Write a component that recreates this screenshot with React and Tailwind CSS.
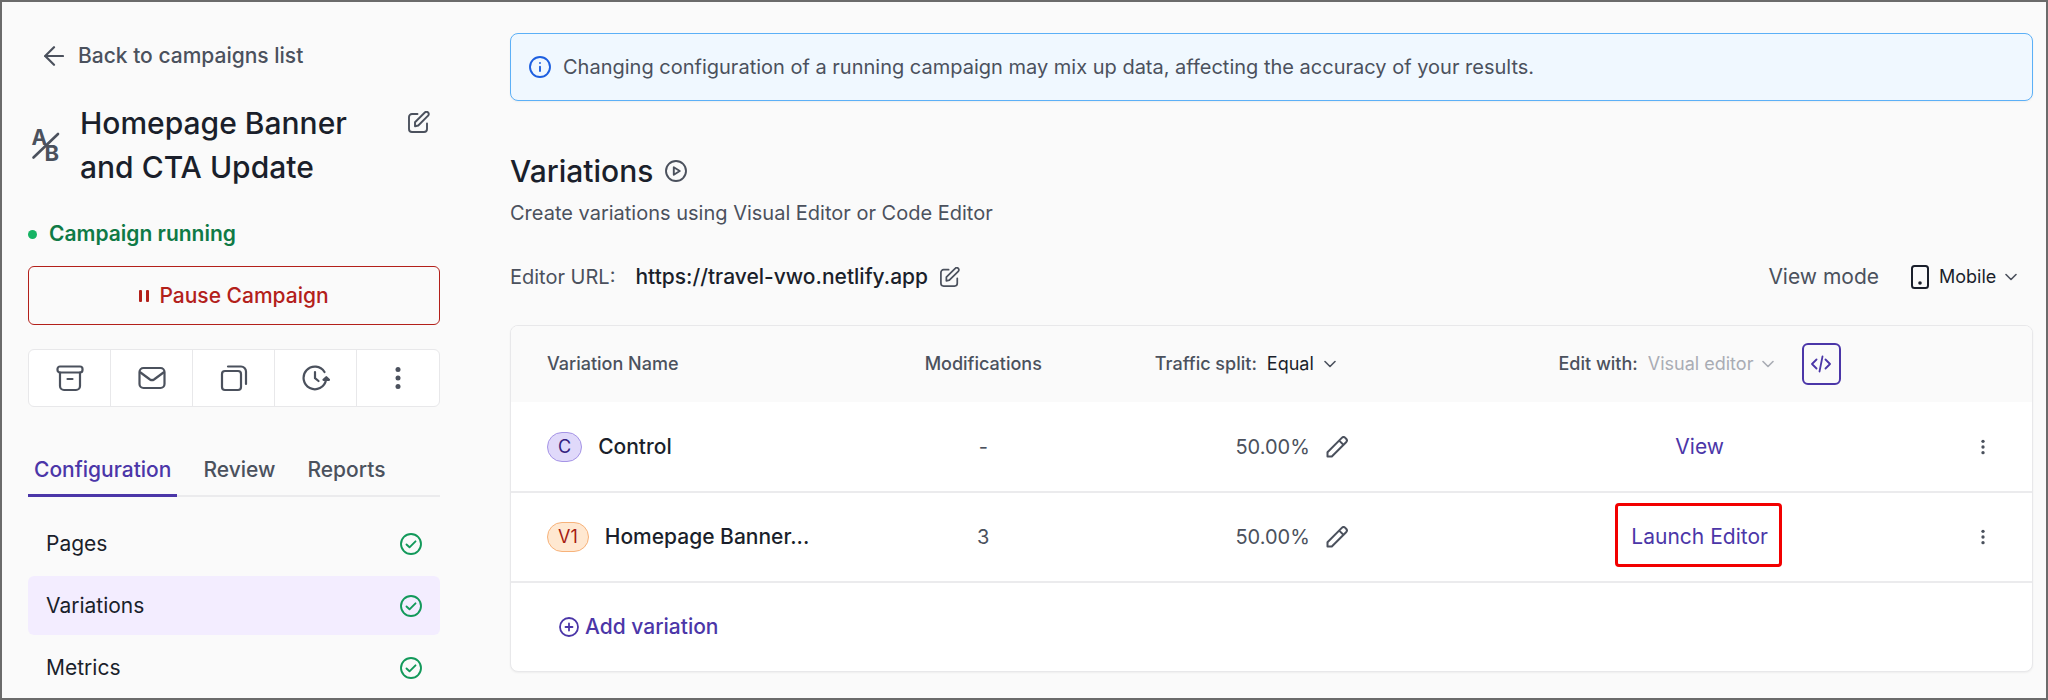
import React from "react";

const ink = "text-[#1a1f2b]";

function Svg({ className, viewBox = "0 0 24 24", width = 2, children }) {
  return (
    <svg
      className={`shrink-0 ${className}`}
      viewBox={viewBox}
      fill="none"
      stroke="currentColor"
      strokeWidth={width}
      strokeLinecap="round"
      strokeLinejoin="round"
      aria-hidden="true"
    >
      {children}
    </svg>
  );
}

const BackArrow = () => (
  <Svg className="h-5 w-5" viewBox="0 0 20 20" width={2.2}>
    <path d="M19 10H1M10 1.200 1.200 10l8.800 8.800" />
  </Svg>
);

const EditSquare = ({ className }) => (
  <Svg className={className} viewBox="0 0 22 22" width={1.9}>
    <path d="M9.500 3H4a3 3 0 0 0-3 3v12a3 3 0 0 0 3 3h12a3 3 0 0 0 3-3v-5.500" />
    <path d="M7 11.200 16.800 1.500a2.200 2.200 0 0 1 3.300 0 2.200 2.200 0 0 1 0 3.200L10.300 14.500 7 15.200z" />
  </Svg>
);

const AbIcon = () => (
  <svg className="h-8 w-7 shrink-0 overflow-visible" viewBox="0 0 28 32" aria-hidden="true">
    <path d="M26 5 1.500 28.500" stroke="currentColor" strokeWidth="2.600" strokeLinecap="round" />
    <g fill="currentColor" fontFamily="Inter, sans-serif" fontWeight="700">
      <text x="-0.500" y="15.500" fontSize="21">A</text>
      <text x="12.500" y="32" fontSize="22">B</text>
    </g>
  </svg>
);

const ArchiveIcon = () => (
  <Svg className="h-7 w-7" viewBox="0 0 28 28" width={2.2}>
    <rect x="1.500" y="2.500" width="25" height="6" rx="2.500" />
    <path d="M4 8.500V22a4 4 0 0 0 4 4h12a4 4 0 0 0 4-4V8.500M11.500 15h5" />
  </Svg>
);

const MailIcon = () => (
  <Svg className="h-7 w-7" viewBox="0 0 28 28" width={2.2}>
    <rect x="1.500" y="4" width="25" height="20" rx="4" />
    <path d="m2.500 8.500 9.500 7a3.500 3.500 0 0 0 4 0l9.500-7" />
  </Svg>
);

const CopyIcon = () => (
  <Svg className="h-7 w-7" viewBox="0 0 28 28" width={2.2}>
    <rect x="2" y="7" width="19" height="19" rx="3" />
    <path d="M8 2.500h13a5 5 0 0 1 5 5V20" />
  </Svg>
);

const HistoryIcon = () => (
  <Svg className="h-7 w-7" viewBox="0 0 28 28" width={2.2}>
    <path d="M22.500 8A11.300 11.300 0 1 0 24 16M13 8v6.200l3.500 2.800" />
    <path d="M21.500 15.800 24.300 13.200l2.700 2.600z" fill="currentColor" />
  </Svg>
);

const DotsIcon = ({ className }) => (
  <svg className={`shrink-0 ${className}`} viewBox="0 0 24 24" fill="currentColor" aria-hidden="true">
    <circle cx="12" cy="3.500" r="2.500" />
    <circle cx="12" cy="12" r="2.500" />
    <circle cx="12" cy="20.500" r="2.500" />
  </svg>
);

const CheckIcon = () => (
  <Svg className="h-[22px] w-[22px] text-[#12995a]" viewBox="0 0 22 22" width={1.9}>
    <circle cx="11" cy="11" r="10" />
    <path d="m6.500 11.500 3 2.800 6-6" />
  </Svg>
);

const InfoIcon = () => (
  <Svg className="h-[22px] w-[22px] text-[#1d5fe0]" viewBox="0 0 22 22" width={1.9}>
    <circle cx="11" cy="11" r="10" />
    <path d="M11 10.800V15M11 7v.1" />
  </Svg>
);

const PlayIcon = () => (
  <Svg className="h-[22px] w-[22px]" viewBox="0 0 22 22" width={1.9}>
    <circle cx="11" cy="11" r="10" />
    <path d="M8.800 7.300v7.400l6-3.700z" />
  </Svg>
);

const PlusIcon = () => (
  <Svg className="h-5 w-5" viewBox="0 0 20 20" width={1.8}>
    <circle cx="10" cy="10" r="9" />
    <path d="M10 6.500v7M6.500 10h7" />
  </Svg>
);

const PencilIcon = () => (
  <Svg className="h-[22px] w-[22px]" viewBox="0 0 22 22">
    <path d="M1.500 20.500v-4.300L15.800 1.900a2.500 2.500 0 0 1 3.500 0l.8.8a2.500 2.500 0 0 1 0 3.500L5.800 20.500zM13.200 4.600l4.200 4.200" />
  </Svg>
);

const PhoneIcon = () => (
  <svg className="h-6 w-[18px] shrink-0" viewBox="0 0 18 24" fill="none" aria-hidden="true">
    <rect x="1" y="1" width="16" height="22" rx="2.500" stroke="currentColor" strokeWidth="2" />
    <circle cx="9" cy="18" r="1.800" fill="currentColor" />
  </svg>
);

const CodeIcon = () => (
  <Svg className="h-5 w-5" viewBox="0 0 20 20" width={1.8}>
    <path d="M5.500 5.500 1 10l4.500 4.500M14.500 5.500 19 10l-4.500 4.500M11.500 2.500l-3 15" />
  </Svg>
);

const Chevron = () => (
  <Svg className="pointer-events-none h-3 w-3" viewBox="0 0 12 12" width={1.6}>
    <path d="m1 3.500 5 5 5-5" />
  </Svg>
);

function Picker({ id, label, value, width, tone, chevronTone }) {
  return (
    <span className={`inline-grid items-center ${width}`}>
      <select
        id={id}
        aria-label={label}
        className={`col-start-1 row-start-1 w-full appearance-none bg-transparent ${tone}`}
      >
        <option>{value}</option>
      </select>
      <span className={`pointer-events-none col-start-1 row-start-1 justify-self-end ${chevronTone}`}>
        <Chevron />
      </span>
    </span>
  );
}

const actions = [
  ["Archive", <ArchiveIcon />],
  ["Send by mail", <MailIcon />],
  ["Duplicate", <CopyIcon />],
  ["History", <HistoryIcon />],
  ["More", <DotsIcon className="h-6 w-6" />],
];

const steps = ["Pages", "Variations", "Metrics"];

function Sidebar() {
  return (
    <aside className="flex w-[412px] shrink-0 flex-col text-[#4b515d]">
      <a href="#campaigns" className="flex items-center gap-3.5 pt-3 pl-4 text-[21px] leading-8 font-medium">
        <BackArrow />
        Back to campaigns list
      </a>

      <div className="mt-[29px] flex items-center gap-5 pr-2.5 pl-1">
        <AbIcon />
        <h1 className={`min-w-0 flex-1 pr-8 text-[30px] leading-11 font-medium ${ink}`}>
          Homepage Banner and CTA Update
        </h1>
        <button aria-label="Rename campaign" className="self-start pt-2.5">
          <EditSquare className="h-[22px] w-[22px]" />
        </button>
      </div>

      <p className="mt-[29px] flex items-center gap-3 text-[21px] leading-8 font-semibold text-[#0f7a46]">
        <span className="h-[9px] w-[9px] rounded-full bg-[#16b364]" />
        Campaign running
      </p>

      <button className="mt-4 flex h-[59px] items-center justify-center gap-2.5 rounded-md border border-[#b3201a] text-[21px] font-medium text-[#b3201a]">
        <svg className="h-3 w-2.5" viewBox="0 0 10 12" fill="currentColor" aria-hidden="true">
          <rect x="0" width="3" height="12" rx="1" />
          <rect x="7" width="3" height="12" rx="1" />
        </svg>
        Pause Campaign
      </button>

      <div className="mt-6 grid h-[58px] grid-cols-5 divide-x divide-[#e8e8ea] rounded-md border border-[#e8e8ea] bg-white">
        {actions.map(([name, icon]) => (
          <button key={name} aria-label={name} className="flex items-center justify-center">
            {icon}
          </button>
        ))}
      </div>

      <nav className="mt-[41px] flex border-b-2 border-[#ebebed] text-[21px] leading-8 font-medium">
        <a href="#configuration" className="-mb-0.5 border-b-[3px] border-[#4b36a8] px-1.5 pt-1.5 pb-2 text-[#4b36a8]">
          Configuration
        </a>
        <a href="#review" className="ml-5 px-1.5 pt-1.5 pb-2">Review</a>
        <a href="#reports" className="ml-5 px-1.5 pt-1.5 pb-2">Reports</a>
      </nav>

      <ul className={`mt-[17px] flex flex-col gap-[3px] text-[21px] ${ink}`}>
        {steps.map((step) => (
          <li key={step}>
            <a
              href={`#${step.toLowerCase()}`}
              className={`flex h-[59px] items-center justify-between rounded-md px-[18px] ${
                step === "Variations" ? "bg-[#f3edff]" : ""
              }`}
            >
              {step}
              <CheckIcon />
            </a>
          </li>
        ))}
      </ul>
    </aside>
  );
}

const rows = [
  {
    tag: "C",
    name: "Control",
    changes: "-",
    split: "50.00%",
    action: "View",
    badge: "border-[#a594e6] bg-[#e0d9fa] text-[#33207f]",
  },
  {
    tag: "V1",
    name: "Homepage Banner...",
    changes: "3",
    split: "50.00%",
    action: "Launch Editor",
    badge: "border-[#f7b27a] bg-[#ffe8d1] text-[#a61b12]",
    marked: true,
  },
];

function VariationsTable() {
  return (
    <div className="mt-8 overflow-hidden rounded-lg border border-[#e8e8ea] bg-white shadow-xs">
      <table className="w-full table-fixed text-[20px] text-[#4b515d]">
        <colgroup>
          <col className="w-[21.2%]" />
          <col className="w-[19.7%]" />
          <col className="w-[22.8%]" />
          <col className="w-[28.9%]" />
          <col className="w-[7.4%]" />
        </colgroup>
        <thead className="bg-[#fafafa] text-[18px]">
          <tr className="h-[76px]">
            <th className="pl-9 text-left font-medium">Variation Name</th>
            <th className="font-medium">Modifications</th>
            <th className="pr-[132px] font-medium">
              <div className="flex items-center justify-end gap-2.5 pr-3 whitespace-nowrap">
                <label htmlFor="split">Traffic split:</label>
                <span className="font-normal">
                  <Picker id="split" label="Traffic split" value="Equal" width="w-[69px]" tone={ink} chevronTone="text-[#4b515d]" />
                </span>
              </div>
            </th>
            <th className="font-medium">
              <div className="flex items-center justify-center whitespace-nowrap">
                <label htmlFor="editor">Edit with:</label>
                <span className="pl-2.5 font-normal">
                  <Picker id="editor" label="Edit with" value="Visual editor" width="w-[126px]" tone="text-[#a9acb4]" chevronTone="text-[#a9acb4]" />
                </span>
                <button
                  aria-label="Open code editor"
                  className="ml-7 flex h-[42px] w-[39px] items-center justify-center rounded-md border-2 border-[#4b36a8] text-[#4b36a8]"
                >
                  <CodeIcon />
                </button>
              </div>
            </th>
            <th aria-label="Options" />
          </tr>
        </thead>
        <tbody>
          {rows.map((row) => (
            <tr key={row.tag} className="h-[90px] border-b-2 border-[#ebebed]">
              <td className="pl-9">
                <div className="flex items-center gap-4 whitespace-nowrap">
                  <span className={`flex h-[30px] items-center rounded-full border px-2.5 text-[18px] ${row.badge}`}>
                    {row.tag}
                  </span>
                  <span className={`text-[21px] font-medium ${ink}`}>{row.name}</span>
                </div>
              </td>
              <td className="text-center">{row.changes}</td>
              <td className="pr-[132px]">
                <div className="flex items-center justify-end gap-4">
                  {row.split}
                  <button aria-label={`Edit traffic of ${row.name}`}>
                    <PencilIcon />
                  </button>
                </div>
              </td>
              <td className="text-center">
                <span className="relative inline-block text-[21px]">
                  <a href="#editor" className="text-[#4b36a8]">{row.action}</a>
                  {row.marked && (
                    <span className="pointer-events-none absolute -top-[18px] -right-3.5 -bottom-3.5 -left-4 rounded-sm border-[3px] border-[#f20000]" />
                  )}
                </span>
              </td>
              <td className="pr-10">
                <button aria-label={`Options of ${row.name}`} className="ml-auto block">
                  <DotsIcon className="h-4 w-[18px]" />
                </button>
              </td>
            </tr>
          ))}
        </tbody>
      </table>
      <div className="flex h-[88px] items-center pl-12">
        <button className="flex items-center gap-1.5 text-[21px] font-medium text-[#4b36a8]">
          <PlusIcon />
          Add variation
        </button>
      </div>
    </div>
  );
}

export default function App() {
  return (
    <div className="flex min-h-screen gap-[70px] border-2 border-[#6b6b6b] bg-[#fafafa] pt-[26px] pr-[13px] pl-[26px] font-['Inter',sans-serif] text-[20px] leading-8 text-[#4b515d]">
      <Sidebar />
      <main className="min-w-0 flex-1 pt-[5px]">
        <div className="flex h-[68px] items-center gap-3 rounded-lg border border-[#5cb0f7] bg-[#f0f8ff] px-[18px] shadow-xs">
          <InfoIcon />
          <p>Changing configuration of a running campaign may mix up data, affecting the accuracy of your results.</p>
        </div>

        <div className="mt-12 flex items-center gap-3">
          <h2 className={`text-[30px] leading-11 font-medium ${ink}`}>Variations</h2>
          <button aria-label="Play introduction">
            <PlayIcon />
          </button>
        </div>
        <p className="mt-1">Create variations using Visual Editor or Code Editor</p>

        <div className="mt-8 flex items-center justify-between">
          <div className="flex items-center text-[21px]">
            <span className="text-[20px]">Editor URL:</span>
            <a href="https://travel-vwo.netlify.app" className={`pl-5 font-medium ${ink}`}>
              https://travel-vwo.netlify.app
            </a>
            <button aria-label="Edit URL" className="pl-3">
              <EditSquare className="h-5 w-5" />
            </button>
          </div>
          <div className="flex items-center pr-4">
            <label htmlFor="mode" className="text-[21px]">View mode</label>
            <span className={`flex items-center gap-2.5 pl-8 text-[18px] ${ink}`}>
              <PhoneIcon />
              <Picker id="mode" label="View mode" value="Mobile" width="w-[78px]" tone={ink} chevronTone="text-[#4b515d]" />
            </span>
          </div>
        </div>

        <VariationsTable />
      </main>
    </div>
  );
}
